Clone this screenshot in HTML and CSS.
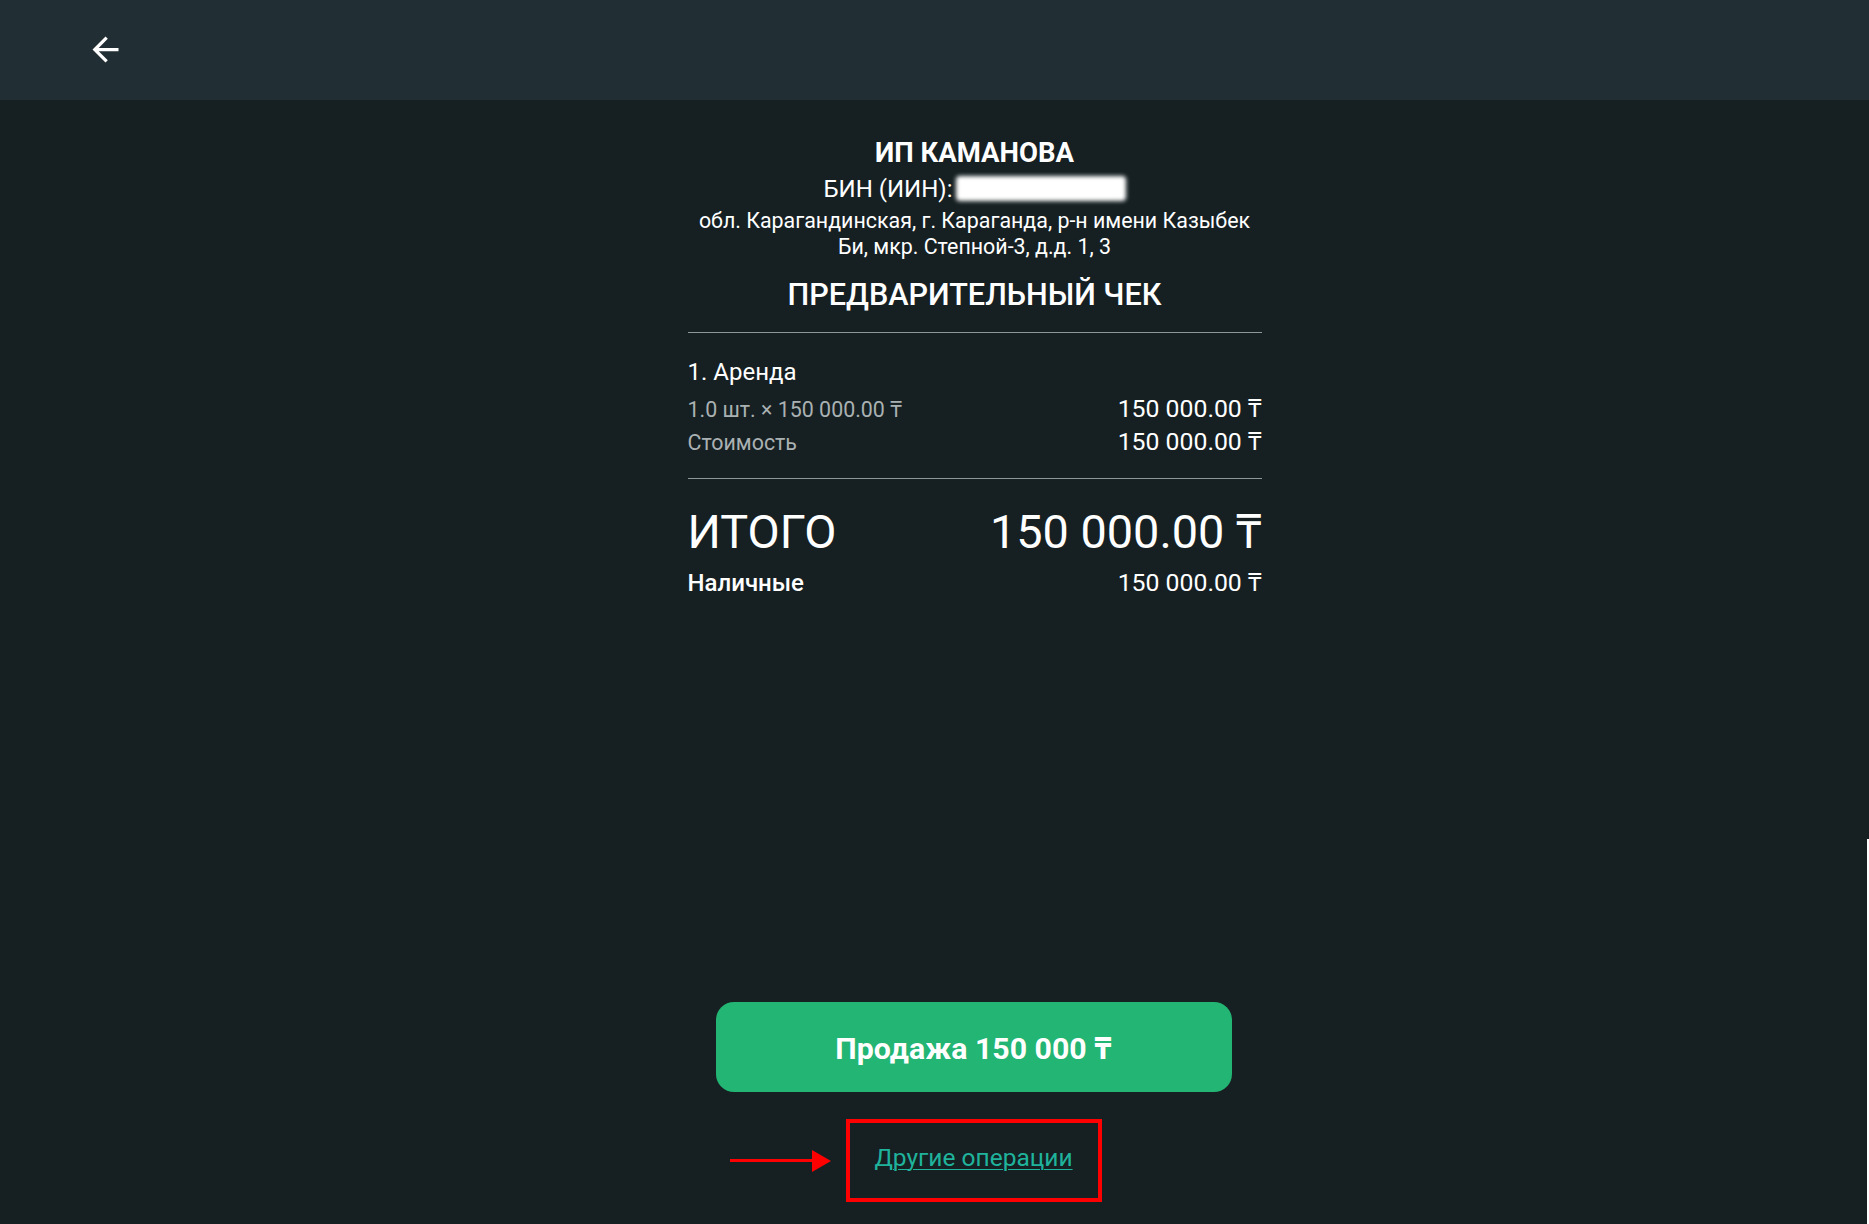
FILE: index.html
```html
<!DOCTYPE html>
<html lang="ru">
<head>
<meta charset="utf-8">
<title>Предварительный чек</title>
<link rel="stylesheet" href="styles.css">
</head>
<body>
<div class="app">
  <header class="topbar">
    <button class="back" aria-label="Назад">
      <svg viewBox="0 0 24 24" width="39" height="39"><path fill="#ffffff" d="M20 11H7.83l5.59-5.59L12 4l-8 8 8 8 1.41-1.41L7.83 13H20v-2z"/></svg>
    </button>
  </header>
  <main class="main">
    <section class="receipt">
      <div class="company">ИП КАМАНОВА</div>
      <div class="bin">БИН (ИИН):<span class="bin-mask"></span></div>
      <div class="address">обл. Карагандинская, г. Караганда, р-н имени Казыбек Би, мкр. Степной-3, д.д. 1, 3</div>
      <h1 class="title">ПРЕДВАРИТЕЛЬНЫЙ ЧЕК</h1>
      <hr class="divider divider-top">
      <div class="items">
        <div class="item-name">1. Аренда</div>
        <div class="row row-qty">
          <span class="muted">1.0 шт. × 150 000.00 ₸</span>
          <span>150 000.00 ₸</span>
        </div>
        <div class="row">
          <span class="muted">Стоимость</span>
          <span>150 000.00 ₸</span>
        </div>
      </div>
      <hr class="divider divider-bottom">
      <div class="total">
        <span>ИТОГО</span>
        <span>150 000.00 ₸</span>
      </div>
      <div class="row row-pay">
        <span class="pay-name">Наличные</span>
        <span>150 000.00 ₸</span>
      </div>
    </section>
    <section class="actions">
      <button class="sell">Продажа 150 000 ₸</button>
      <div class="other-wrap">
        <span class="pointer" aria-hidden="true"><span class="pointer-line"></span><span class="pointer-head"></span></span>
        <a class="other" href="#">Другие операции</a>
      </div>
    </section>
  </main>
  <span class="edge-line" aria-hidden="true"></span>
</div>
</body>
</html>
```
FILE: styles.css
```css
* { box-sizing: border-box; }
html, body { margin: 0; padding: 0; }
body {
  background: #162023;
  color: #ffffff;
  font-family: Roboto, "Noto Sans", "Liberation Sans", sans-serif;
  width: 1869px;
  height: 1224px;
  overflow: hidden;
}
.app {
  position: relative;
  height: 1224px;
  display: flex;
  flex-direction: column;
}
.topbar {
  height: 100px;
  flex: 0 0 100px;
  background: #212e33;
  display: flex;
  align-items: center;
  padding-left: 86px;
}
.back {
  background: none;
  border: 0;
  padding: 0;
  width: 39px;
  height: 39px;
  display: flex;
  margin-top: -1px;
  cursor: pointer;
}
.main {
  flex: 1;
  display: flex;
  flex-direction: column;
  align-items: center;
  padding-left: 80px;
  padding-bottom: 22px;
}
.receipt {
  width: 574px;
  padding-top: 37px;
  text-align: center;
}
.company {
  font-size: 27.5px;
  font-weight: 700;
  line-height: 32px;
}
.bin {
  font-size: 24px;
  line-height: 30px;
  margin-top: 5px;
}
.bin-mask {
  display: inline-block;
  width: 170px;
  height: 25px;
  margin-left: 3px;
  vertical-align: -4px;
  background: #ffffff;
  border-radius: 4px;
  filter: blur(2px);
}
.address {
  font-size: 21.4px;
  line-height: 26px;
  margin-top: 4px;
}
.title {
  margin: 16.5px 0 0;
  font-size: 30.6px;
  font-weight: 500;
  line-height: 36px;
}
.divider {
  border: 0;
  height: 1px;
  background: #8f9799;
  margin: 0;
}
.divider-top { margin-top: 19px; }
.items {
  text-align: left;
  padding-top: 23px;
}
.item-name {
  font-size: 24px;
  line-height: 32px;
}
.row {
  display: flex;
  justify-content: space-between;
  align-items: baseline;
  font-size: 24.8px;
  line-height: 32px;
}
.row-qty { margin-top: 5px; }
.muted {
  color: #aab1b2;
  font-size: 21.4px;
}
.divider-bottom { margin-top: 19px; }
.total {
  display: flex;
  justify-content: space-between;
  align-items: baseline;
  font-size: 46.8px;
  line-height: 54px;
  margin-top: 26px;
}
.row-pay {
  margin-top: 8px;
}
.pay-name { font-weight: 500; font-size: 24px; }
.actions {
  margin-top: auto;
  display: flex;
  flex-direction: column;
  align-items: center;
}
.sell {
  width: 516px;
  height: 90px;
  margin-right: 2px;
  border: 0;
  border-radius: 18px;
  background: #22b573;
  color: #ffffff;
  font-family: inherit;
  font-size: 30.3px;
  font-weight: 700;
  cursor: pointer;
}
.other-wrap {
  position: relative;
  margin-top: 27px;
  margin-right: 2px;
  width: 256px;
  height: 83px;
  border: 4px solid #ff0000;
  display: flex;
  align-items: center;
  justify-content: center;
}
.other {
  color: #1fb39c;
  font-size: 24.5px;
  text-decoration: underline;
  text-underline-offset: 3px;
  text-decoration-thickness: 1px;
  margin-top: -7px;
}
.pointer {
  position: absolute;
  right: 100%;
  top: 50%;
  margin-right: 19px;
  width: 101px;
  height: 22px;
  display: flex;
  align-items: center;
  transform: translateY(-50%);
}
.pointer-line {
  flex: 1;
  height: 3px;
  background: #ff0000;
}
.pointer-head {
  width: 0;
  height: 0;
  border-top: 11px solid transparent;
  border-bottom: 11px solid transparent;
  border-left: 19px solid #ff0000;
}
.edge-line {
  position: absolute;
  right: 0;
  top: 839px;
  bottom: 0;
  width: 2px;
  background: #ffffff;
}
```
